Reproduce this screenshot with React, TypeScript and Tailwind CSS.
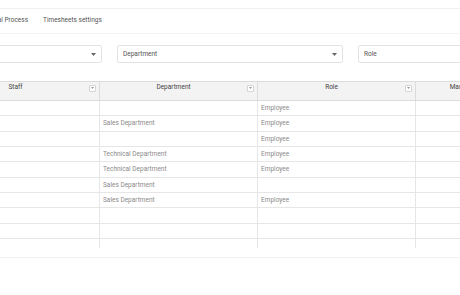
import React from 'react';

type Row = { dept: string; role: string };

const rows: Row[] = [
  { dept: '', role: 'Employee' },
  { dept: 'Sales Department', role: 'Employee' },
  { dept: '', role: 'Employee' },
  { dept: 'Technical Department', role: 'Employee' },
  { dept: 'Technical Department', role: 'Employee' },
  { dept: 'Sales Department', role: '' },
  { dept: 'Sales Department', role: 'Employee' },
  { dept: '', role: '' },
  { dept: '', role: '' },
];

// row heights alternate to land on the same lines as the screenshot
const rowHeights = ['h-[15px]', 'h-[16px]', 'h-[15px]', 'h-[15px]', 'h-[16px]', 'h-[15px]', 'h-[15px]', 'h-[16px]', 'h-[15px]'];

function Caret() {
  return (
    <svg width="5" height="3" viewBox="0 0 5 3" className="shrink-0">
      <path d="M0 0h5L2.5 3z" fill="#666" />
    </svg>
  );
}

function FilterIcon() {
  return (
    <span className="flex h-[7px] w-[7px] items-center justify-center rounded-[1px] border border-[#d4d4d4] bg-white">
      <svg width="3" height="2" viewBox="0 0 3 2">
        <path d="M0 0h3L1.5 2z" fill="#999" />
      </svg>
    </span>
  );
}

function Select({ label, caret }: { label?: string; caret?: boolean }) {
  return (
    <div className="flex h-[18px] w-[226px] shrink-0 items-center justify-between rounded-[2px] border border-[#e3e3e3] bg-white px-[5px] pt-[1px]">
      <span className="text-[6.5px] text-[#555]">{label}</span>
      {caret && <Caret />}
    </div>
  );
}

function HeaderCell({ title, width = 'w-[158px]', last }: { title: string; width?: string; last?: boolean }) {
  return (
    <div className={`flex h-full shrink-0 items-center pb-[6px] ${width} ${last ? '' : 'border-r border-[#dcdcdc]'}`}>
      <span className="flex-1 text-center text-[6.5px] text-[#444]">{title}</span>
      <span className="mr-[3px]">
        <FilterIcon />
      </span>
    </div>
  );
}

export default function App() {
  return (
    <div className="h-[295px] w-[460px] overflow-hidden bg-white font-['Roboto','Liberation_Sans',sans-serif]">
      <div className="h-[9px] border-b border-[#f1f1f1]" />
      <div className="flex h-[25px] items-center gap-[15px] border-b border-[#f4f4f4] text-[6.5px] text-[#555]">
        <span className="ml-[-52px] w-[80px] shrink-0 text-right">Approval Process</span>
        <span className="shrink-0">Timesheets settings</span>
      </div>

      <div className="ml-[-124px] mt-[11px] flex gap-[15px]">
        <Select caret />
        <Select label="Department" caret />
        <Select label="Role" />
      </div>

      <div className="ml-[-58px] mt-[18px] w-[700px]">
        <div className="flex h-[20px] border-y border-[#dcdcdc] bg-[#f3f3f3]">
          <HeaderCell title="Staff" />
          <HeaderCell title="Department" />
          <HeaderCell title="Role" />
          <HeaderCell title="Manager" width="w-[104px]" />
        </div>
        <div className="flex h-[147px] flex-col">
          {rows.map((r, i) => (
            <div key={i} className={`flex shrink-0 border-b border-[#e6e6e6] ${rowHeights[i]}`}>
              <div className="w-[158px] shrink-0 border-r border-[#e6e6e6]" />
              <div className="flex w-[158px] shrink-0 items-center border-r border-[#e6e6e6] px-[3px] pt-[1px] text-[6.5px] text-[#8a8a8a]">
                {r.dept}
              </div>
              <div className="flex w-[158px] shrink-0 items-center border-r border-[#e6e6e6] px-[3px] pt-[1px] text-[6.5px] text-[#8a8a8a]">
                {r.role}
              </div>
              <div className="w-[104px] shrink-0" />
            </div>
          ))}
          <div className="flex flex-1">
            <div className="w-[158px] shrink-0 border-r border-[#e6e6e6]" />
            <div className="w-[158px] shrink-0 border-r border-[#e6e6e6]" />
            <div className="w-[158px] shrink-0 border-r border-[#e6e6e6]" />
          </div>
        </div>
      </div>
      <div className="mt-[9px] h-[1px] bg-[#f3f3f3]" />
    </div>
  );
}
